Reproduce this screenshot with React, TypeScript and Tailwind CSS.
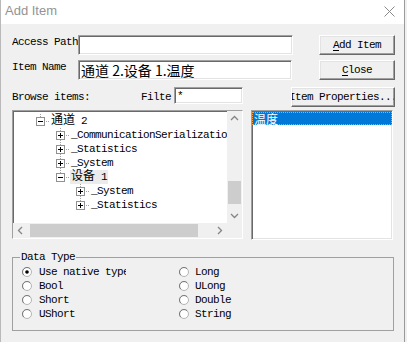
import React from 'react';

// classic win32 look: sunken edits, raised buttons
const mono = "font-['Liberation_Mono','Noto_Sans_CJK_SC',monospace] text-[11px] tracking-[-0.6px] text-black";
const sunken =
  'border border-t-[#a0a0a0] border-l-[#a0a0a0] border-r-white border-b-white shadow-[inset_1px_1px_0_#696969,inset_-1px_-1px_0_#e3e3e3] bg-white';
const raised =
  'border border-t-white border-l-white border-r-[#696969] border-b-[#696969] shadow-[inset_-1px_-1px_0_#a0a0a0,inset_1px_1px_0_#e3e3e3] bg-[#f0f0f0]';

const Cjk: React.FC<{ text: string }> = ({ text }) => {
  const parts = text.split(/([\u4e00-\u9fff]+)/);
  return (
    <>
      {parts.map((p, i) =>
        /[\u4e00-\u9fff]/.test(p) ? (
          <span key={i} className="text-[12px] tracking-normal">
            {p}
          </span>
        ) : (
          <React.Fragment key={i}>{p}</React.Fragment>
        )
      )}
    </>
  );
};

interface TreeRow {
  level: 1 | 2 | 3;
  label: string;
  open: boolean;
  next: boolean;
  hl?: boolean;
}

const rows: TreeRow[] = [
  { level: 1, label: '通道 2', open: true, next: false },
  { level: 2, label: '_CommunicationSerialization', open: false, next: true },
  { level: 2, label: '_Statistics', open: false, next: true },
  { level: 2, label: '_System', open: false, next: true },
  { level: 2, label: '设备 1', open: true, next: false, hl: true },
  { level: 3, label: '_System', open: false, next: true },
  { level: 3, label: '_Statistics', open: false, next: false },
];

const indent: Record<number, string> = { 1: 'w-[18px]', 2: 'w-[38px]', 3: 'w-[58px]' };

const Connector: React.FC<{ open: boolean; next: boolean }> = ({ open, next }) => (
  <svg width="19" height="14" className="shrink-0" shapeRendering="crispEdges">
    <g stroke="#a0a0a0" strokeDasharray="1 1">
      <line x1="9.5" y1="0" x2="9.5" y2="3" />
      {next && <line x1="9.5" y1="12" x2="9.5" y2="14" />}
      <line x1="15" y1="7.5" x2="19" y2="7.5" />
    </g>
    <rect x="5.5" y="3.5" width="8" height="8" fill="white" stroke="#919191" />
    <line x1="7" y1="7.5" x2="12" y2="7.5" stroke="black" />
    {!open && <line x1="9.5" y1="5" x2="9.5" y2="10" stroke="black" />}
  </svg>
);

const Chevron: React.FC<{ dir: 'up' | 'down' | 'left' | 'right' }> = ({ dir }) => {
  const pts = {
    up: '1,5 4.5,1.5 8,5',
    down: '1,2 4.5,5.5 8,2',
    left: '5,1 1.5,4.5 5,8',
    right: '2,1 5.5,4.5 2,8',
  }[dir];
  const vertical = dir === 'up' || dir === 'down';
  return (
    <svg width={vertical ? 9 : 7} height={vertical ? 7 : 9}>
      <polyline points={pts} fill="none" stroke="#858585" strokeWidth="1.3" />
    </svg>
  );
};

const Radio: React.FC<{ checked?: boolean }> = ({ checked }) => (
  <svg width="12" height="12" className="shrink-0">
    <circle cx="6" cy="6" r="4.5" fill="white" stroke="#b4b4b4" />
    <path d="M2.8 9.2 A4.5 4.5 0 0 1 9.2 2.8" fill="none" stroke="#7a7a7a" />
    {checked && <circle cx="6" cy="6" r="1.8" fill="black" />}
  </svg>
);

const Button: React.FC<{ className: string; children: React.ReactNode }> = ({ className, children }) => (
  <div className={`${raised} ${className} h-[20px] flex items-center justify-center overflow-hidden whitespace-nowrap leading-[14px]`}>
    {children}
  </div>
);

export default function App() {
  return (
    <div className="w-[407px] h-[342px] bg-[#f0f0f0] flex overflow-hidden">
      <div className={`w-[405px] h-full border-l border-l-[#b9b9b9] border-r border-r-[#9a9a9a] flex flex-col ${mono}`}>
        {/* title bar */}
        <div className="h-[24px] bg-white flex items-center justify-between pl-[4px] pr-[9px] pb-[2px]">
          <span className="font-['Liberation_Sans',sans-serif] text-[13px] tracking-normal text-[#939393]">Add Item</span>
          <svg width="11" height="11">
            <path d="M0.5 0.5 L10.5 10.5 M10.5 0.5 L0.5 10.5" stroke="#8a8a8a" strokeWidth="1" />
          </svg>
        </div>

        <div className="pl-[11px] pt-[11px] flex flex-col">
          {/* access path */}
          <div className="flex items-start">
            <span className="w-[66px] leading-[14px] whitespace-nowrap overflow-hidden">Access Path</span>
            <div className={`${sunken} w-[215px] h-[20px]`} />
            <Button className="ml-[26px] w-[76px]">
              <span className="underline underline-offset-[2px]">A</span>dd Item
            </Button>
          </div>

          {/* item name */}
          <div className="flex items-start mt-[5px]">
            <span className="w-[66px] leading-[14px] whitespace-nowrap">Item Name</span>
            <div className={`${sunken} w-[214px] h-[20px] pl-[2px] flex items-center`}>
              <span className="font-['Noto_Sans_CJK_SC',sans-serif] text-[14px] tracking-normal leading-[18px] whitespace-nowrap">
                通道 2.设备 1.温度
              </span>
            </div>
            <Button className="ml-[27px] w-[76px]">
              <span className="underline underline-offset-[2px]">C</span>lose
            </Button>
          </div>

          {/* browse / filter */}
          <div className="flex items-start mt-[7px]">
            <span className="w-[129px] pt-[3px] leading-[14px] whitespace-nowrap">Browse items:</span>
            <span className="w-[31px] pt-[3px] leading-[14px] whitespace-nowrap overflow-hidden">Filter:</span>
            <div className={`${sunken} ml-[2px] w-[69px] h-[17px] pl-[2px] leading-[14px] flex items-center`}>*</div>
            <Button className="ml-[48px] w-[104px]">Item Properties...</Button>
          </div>

          {/* tree + list */}
          <div className="flex items-start mt-[3px]">
            <div className={`${sunken} w-[231px] h-[129px] flex flex-col`}>
              <div className="flex flex-1 min-h-0">
                <div className="flex-1 min-w-0 overflow-hidden pt-[3px]">
                  {rows.map((r, i) => (
                    <div key={i} className="flex items-center h-[14px]">
                      <div className={`${indent[r.level]} shrink-0`} />
                      <Connector open={r.open} next={r.next} />
                      <span className={`px-[1px] leading-[14px] whitespace-nowrap ${r.hl ? 'bg-[#ebebeb]' : ''}`}>
                        <Cjk text={r.label} />
                      </span>
                    </div>
                  ))}
                </div>
                <div className="w-[15px] bg-[#f0f0f0] flex flex-col">
                  <div className="h-[15px] flex items-center justify-center">
                    <Chevron dir="up" />
                  </div>
                  <div className="flex-1">
                    <div className="mt-[55px] h-[23px] mx-[1px] bg-[#cdcdcd]" />
                  </div>
                  <div className="h-[15px] flex items-center justify-center">
                    <Chevron dir="down" />
                  </div>
                </div>
              </div>
              <div className="h-[15px] flex">
                <div className="flex-1 bg-[#f0f0f0] flex">
                  <div className="w-[15px] flex items-center justify-center">
                    <Chevron dir="left" />
                  </div>
                  <div className="ml-[2px] w-[168px] my-[1px] bg-[#cdcdcd]" />
                  <div className="flex-1" />
                  <div className="w-[15px] flex items-center justify-center">
                    <Chevron dir="right" />
                  </div>
                </div>
                <div className="w-[15px] bg-[#f0f0f0]" />
              </div>
            </div>

            <div className={`${sunken} ml-[8px] w-[142px] h-[130px]`}>
              <div className="mt-[1px] h-[13px] bg-[#0078d7] border border-dotted border-[#f29b45] flex items-center pl-[1px]">
                <span className="font-['Noto_Sans_CJK_SC',sans-serif] text-[12px] tracking-normal leading-[12px] text-white">温度</span>
              </div>
            </div>
          </div>

          {/* data type */}
          <fieldset className="mt-[10px] w-[382px] border border-[#a0a0a0] pb-[9px]">
            <legend className="ml-[7px] px-[1px] leading-[14px]">Data Type</legend>
            <div className="pt-[1px]">
              {[
                ['Use native type', 'Long', true],
                ['Bool', 'ULong', false],
                ['Short', 'Double', false],
                ['UShort', 'String', false],
              ].map(([a, b, c], i) => (
                <div key={i} className="flex items-center h-[14px] pl-[8px]">
                  <div className="w-[157px] flex items-center">
                    <Radio checked={c as boolean} />
                    <span className="ml-[6px] w-[87px] overflow-hidden whitespace-nowrap leading-[14px]">{a as string}</span>
                  </div>
                  <div className="flex items-center">
                    <Radio />
                    <span className="ml-[5px] whitespace-nowrap leading-[14px]">{b as string}</span>
                  </div>
                </div>
              ))}
            </div>
          </fieldset>
        </div>
      </div>
    </div>
  );
}
